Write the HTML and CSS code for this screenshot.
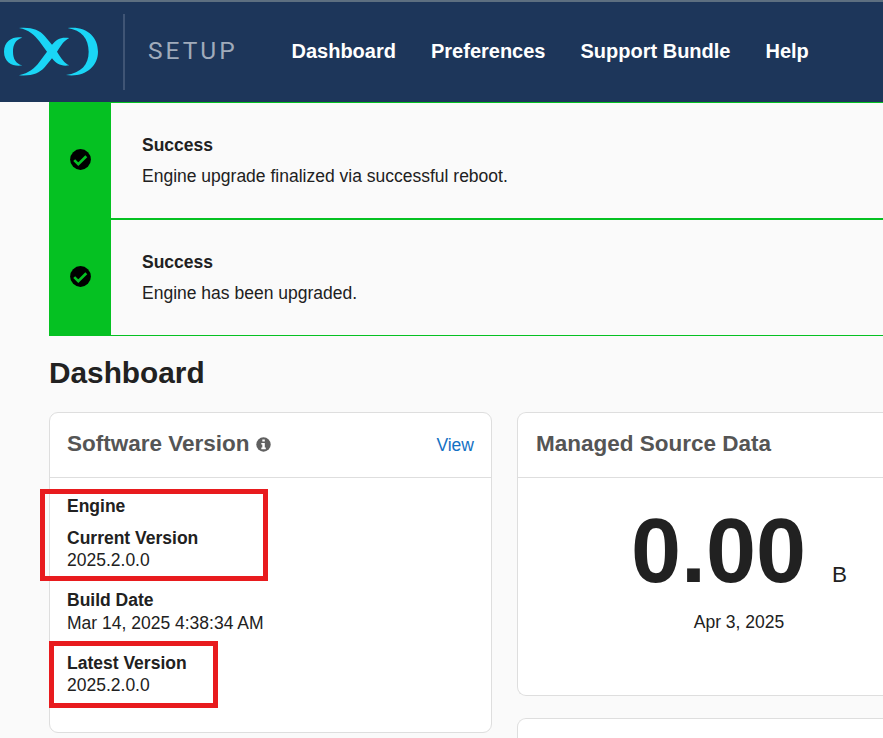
FILE: index.html
```html
<!DOCTYPE html>
<html lang="en">
<head>
<meta charset="utf-8">
<title>Setup - Dashboard</title>
<link rel="stylesheet" href="styles.css">
</head>
<body>
<header class="topbar">
  <svg class="logo" viewBox="0 0 300 160" aria-hidden="true">
    <path d="M67 35C42 30 12 43 12 77S42 123 67 118C47 113 39 98 39 77S47 40 67 35Z"/>
    <path d="M203 6C258 -1 294 31 294 77S253 155 198 147C244 140 266 116 266 77S245 13 203 6Z"/>
    <path d="M57 6C94 3 117 11 134 30L156 56C170 39 183 32 208 36C193 43 184 56 171 77C184 98 193 111 208 118C183 122 170 114 156 97L134 124C117 143 94 151 57 148C87 141 103 128 118 108L141 77L118 46C103 26 87 12 57 6Z"/>
  </svg>
  <span class="divider"></span>
  <span class="product">SETUP</span>
  <nav class="nav">
    <a>Dashboard</a><a>Preferences</a><a>Support Bundle</a><a>Help</a>
  </nav>
</header>
<main class="page">
  <section class="alerts">
    <article class="alert">
      <div class="alert-icon"><svg viewBox="0 0 21 21"><circle cx="10.5" cy="10.5" r="10.4"/><path d="M4.2 11.1 8.3 15.2 16.3 7.2"/></svg></div>
      <div class="alert-body"><h3>Success</h3><p>Engine upgrade finalized via successful reboot.</p></div>
    </article>
    <article class="alert">
      <div class="alert-icon"><svg viewBox="0 0 21 21"><circle cx="10.5" cy="10.5" r="10.4"/><path d="M4.2 11.1 8.3 15.2 16.3 7.2"/></svg></div>
      <div class="alert-body"><h3>Success</h3><p>Engine has been upgraded.</p></div>
    </article>
  </section>
  <h1>Dashboard</h1>
  <div class="columns">
    <section class="card software">
      <header class="card-head">
        <h2>Software Version</h2>
        <svg class="info" viewBox="0 0 15 15"><circle cx="7.5" cy="7.5" r="7.2"/><path d="M6.3 2.5h2.5v2H6.3zM5.3 5.9h3.5v4.7h1v1.6H5.3v-1.6h1V7.4h-1z"/></svg>
        <a class="view">View</a>
      </header>
      <div class="details">
        <h3 class="engine">Engine</h3>
        <dl>
          <div class="field"><dt>Current Version</dt><dd>2025.2.0.0</dd></div>
          <div class="field"><dt>Build Date</dt><dd>Mar 14, 2025 4:38:34 AM</dd></div>
          <div class="field"><dt>Latest Version</dt><dd>2025.2.0.0</dd></div>
        </dl>
      </div>
      <span class="mark mark-current"></span>
      <span class="mark mark-latest"></span>
    </section>
    <div class="column">
      <section class="card managed">
        <header class="card-head"><h2>Managed Source Data</h2></header>
        <div class="metric"><span class="value">0.00</span><span class="unit">B</span></div>
        <p class="date">Apr 3, 2025</p>
      </section>
      <section class="card next"></section>
    </div>
  </div>
</main>
</body>
</html>
```
FILE: styles.css
```css
* { box-sizing: border-box; }
body { margin: 0; background: #fafafa; color: #212121; font: 17.5px/22.5px "Liberation Sans", Arial, sans-serif; }
h1, h2, h3, p, dl, dd { margin: 0; }
.topbar { display: flex; align-items: center; height: 102px; border-top: 2px solid #5d6f80; background: #1d365a; }
.logo { width: 100px; height: 53.33px; margin-top: 2px; flex: none; fill: #1ad6f6; }
.divider { width: 2px; height: 76px; margin-left: 23px; background: #405575; }
.product { width: 143.5px; margin: 0 0 2px 23px; color: #a0abbb; font: 400 24.5px/30px Roboto, sans-serif; letter-spacing: 3px; }
.nav { display: flex; gap: 35px; margin-bottom: 2px; color: #fff; font-size: 20px; font-weight: 700; white-space: nowrap; }
.page { padding-left: 49px; }
.alert { display: flex; height: 117px; }
.alert-icon { display: flex; align-items: center; justify-content: center; width: 62px; background: #05c122; }
.alert-icon svg { width: 21px; height: 21px; margin-bottom: 2px; }
.alert-icon path { fill: none; stroke: #05c122; stroke-width: 2.7; }
.alert-body { flex: 1; padding: 31px 31px 0; border-top: 1px solid #05c122; border-bottom: 1px solid #05c122; }
.alert h3 { font-size: 17.5px; line-height: 22px; }
.alert p { margin-top: 9px; }
h1 { margin-top: 19px; font-size: 29.8px; line-height: 36px; }
.columns { display: flex; gap: 25px; margin-top: 21px; }
.column { display: flex; flex: 1; flex-direction: column; gap: 22px; }
.card { background: #fff; border: 1px solid #dedede; border-radius: 9px; }
.card-head { display: flex; align-items: center; height: 65px; padding: 0 17px; border-bottom: 1px solid #dedede; }
.card-head h2 { margin-bottom: 2px; color: #555; font-size: 22.5px; line-height: 28px; white-space: nowrap; }
.software { position: relative; flex: none; width: 443px; height: 321px; }
.info { width: 15px; height: 15px; margin: 0 0 2px 6.5px; fill: #606060; }
.info path { fill: #fff; }
.view { margin-left: auto; color: #1471c4; }
.details { padding: 17px 17px 0; }
.engine { font-size: 17.5px; line-height: 22px; margin-bottom: 9.8px; }
dt { font-weight: 700; }
.field { margin-bottom: 17.5px; }
.mark { position: absolute; border: 5px solid #e81b1e; }
.mark-current { left: -10px; top: 76px; width: 228px; height: 92px; }
.mark-latest { left: -1px; top: 228px; width: 169px; height: 67px; }
.managed { height: 284px; border-right: 0; border-radius: 9px 0 0 9px; }
.managed .card-head { padding-left: 18px; }
.metric { display: flex; align-items: baseline; justify-content: center; height: 133px; padding: 21px 0 0 77px; line-height: 104px; }
.value { font-size: 90px; font-weight: 700; }
.unit { margin-left: 26px; font-size: 22.5px; }
.date { padding-left: 77px; text-align: center; }
.next { height: 20px; border-right: 0; border-bottom: 0; border-radius: 9px 0 0 0; }
```
